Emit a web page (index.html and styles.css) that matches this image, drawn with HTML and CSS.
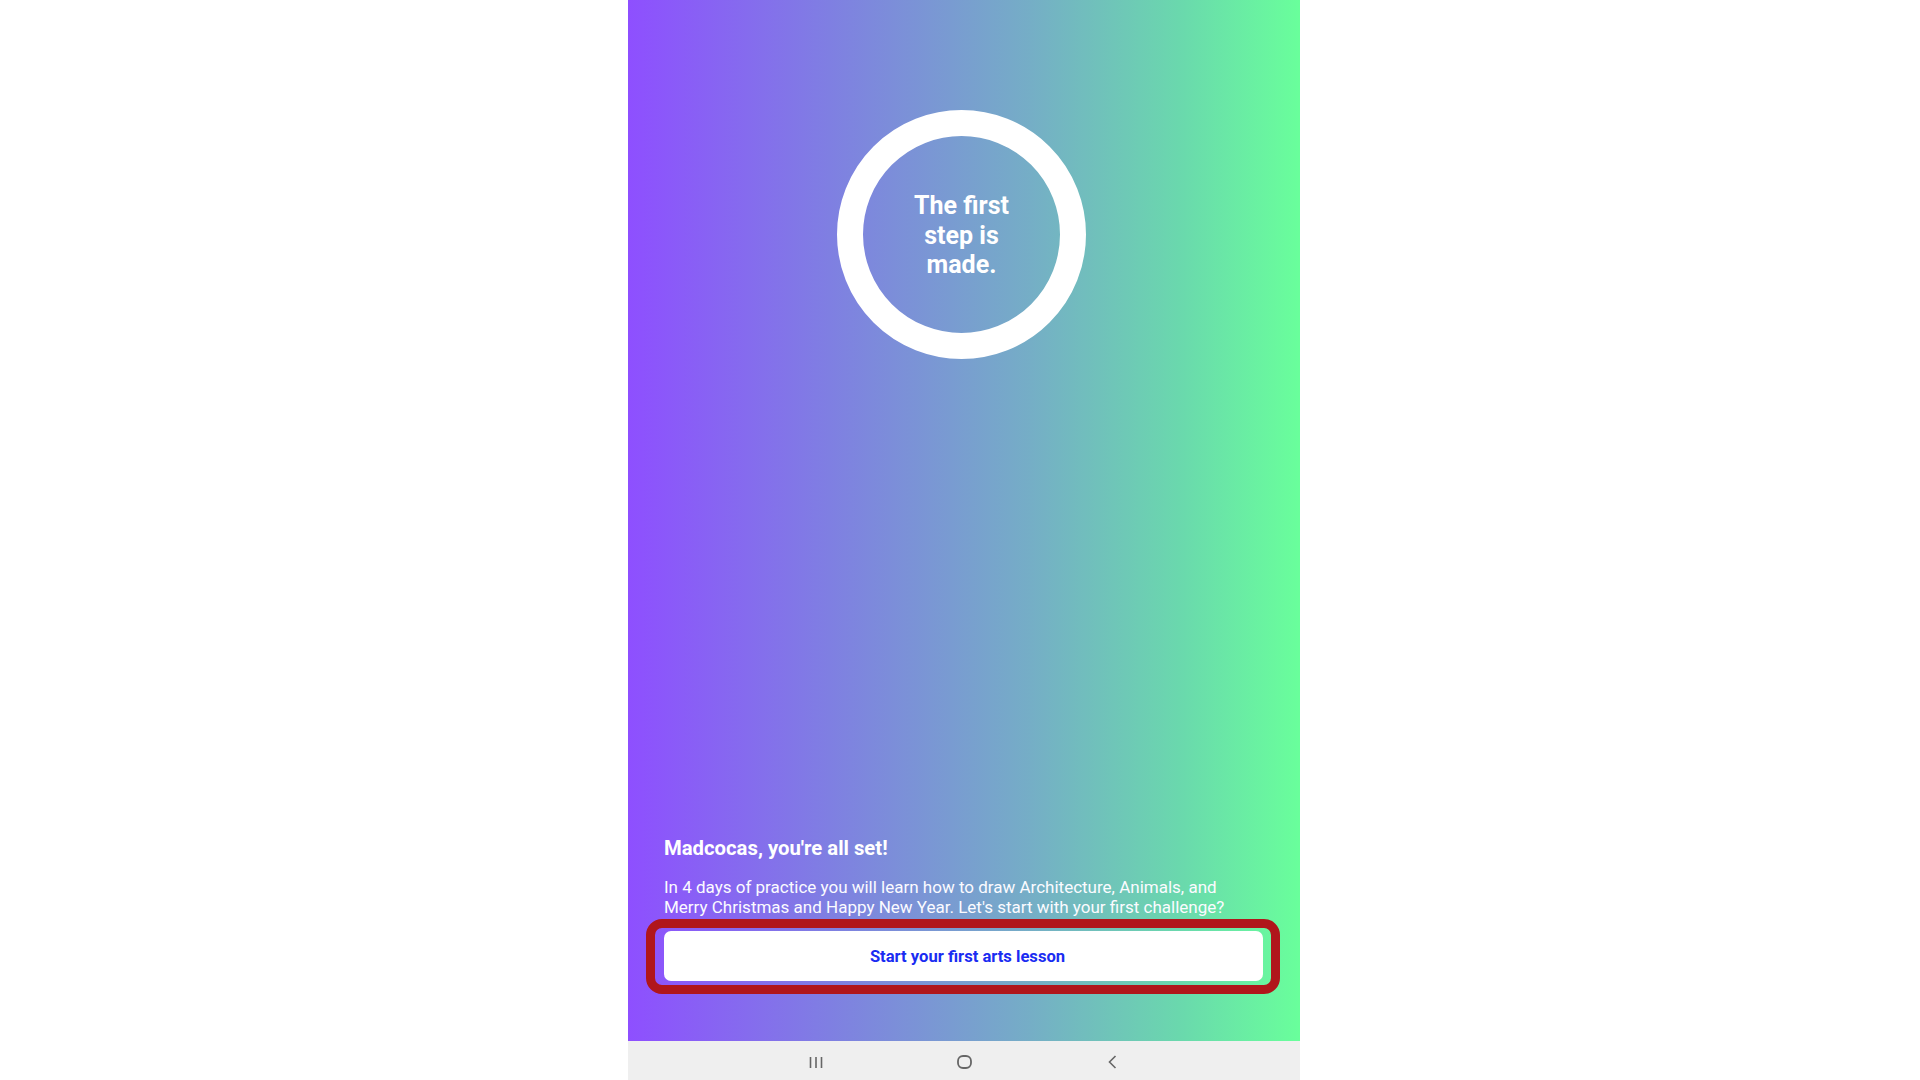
FILE: index.html
```html
<!DOCTYPE html>
<html lang="en">

<head>
    <meta charset="UTF-8">
    <meta name="viewport" content="width=device-width, initial-scale=1.0">
    <title>You're all set</title>
    <link rel="stylesheet" href="styles.css">
</head>

<body>
    <div class="phone">
        <div class="screen">
            <div class="ring">
                <p class="ring-text">The first step is made.</p>
            </div>

            <div class="bottom">
                <h2 class="title">Madcocas, you're all set!</h2>
                <p class="desc">In 4 days of practice you will learn how to draw Architecture, Animals, and Merry Christmas and Happy New Year. Let's start with your first challenge?</p>
                <div class="cta">
                    <button class="start-btn">Start your first arts lesson</button>
                    <span class="highlight"></span>
                </div>
            </div>
        </div>

        <div class="navbar">
            <div class="nav-item">
                <svg width="14" height="13" viewBox="0 0 14 13">
                    <path d="M1.5 1v11M7 1v11M12.5 1v11" stroke="#666" stroke-width="1.6" fill="none" />
                </svg>
            </div>
            <div class="nav-item">
                <svg width="15" height="14" viewBox="0 0 15 14">
                    <rect x="1" y="1" width="13" height="12" rx="5" stroke="#666" stroke-width="1.8" fill="none" />
                </svg>
            </div>
            <div class="nav-item">
                <svg width="9" height="14" viewBox="0 0 9 14">
                    <path d="M7.5 1L1.5 7l6 6" stroke="#666" stroke-width="1.6" fill="none" />
                </svg>
            </div>
        </div>
    </div>
</body>

</html>
```

FILE: styles.css
```css
body {
    margin: 0;
    padding-left: 8px;
    background: #ffffff;
    font-family: Roboto, 'Liberation Sans', sans-serif;
    display: flex;
    justify-content: center;
}

.phone {
    width: 672px;
    height: 1080px;
    display: flex;
    flex-direction: column;
}

.screen {
    flex: 1;
    display: flex;
    flex-direction: column;
    align-items: center;
    padding: 110px 37px 60px 36px;
    background: linear-gradient(to right, #8e4fff 0%, #7f7fe2 30%, #75aec6 60%, #6ad8ad 82%, #69ff9b 100%);
    color: #ffffff;
}

.ring {
    width: 197px;
    height: 197px;
    margin-right: 4px;
    border: 26px solid #ffffff;
    border-radius: 50%;
    display: flex;
    align-items: center;
    justify-content: center;
}

.ring-text {
    margin: 0;
    padding-top: 2px;
    width: 130px;
    text-align: center;
    font-size: 25px;
    font-weight: 700;
    line-height: 29.5px;
    color: #ffffff;
}

.bottom {
    margin-top: auto;
    align-self: stretch;
}

.title {
    margin: 0;
    font-size: 20.3px;
    font-weight: 700;
    line-height: 24px;
}

.desc {
    margin: 18px 0 0;
    font-size: 17px;
    line-height: 19.5px;
    color: #fbfbff;
}

.cta {
    position: relative;
    margin-top: 14px;
}

.start-btn {
    display: block;
    width: 100%;
    height: 50px;
    border: none;
    border-radius: 7px;
    background: #ffffff;
    color: #1a2cf2;
    font-family: inherit;
    font-size: 16.6px;
    font-weight: 700;
    padding: 0 0 0 8px;
    cursor: pointer;
}

.highlight {
    position: absolute;
    top: -12px;
    bottom: -13px;
    left: -18px;
    right: -17px;
    border: 9px solid #b0161b;
    border-radius: 16px;
    pointer-events: none;
}

.navbar {
    height: 39px;
    background: #efefef;
    display: flex;
    justify-content: center;
    align-items: center;
    padding-top: 3px;
    box-sizing: border-box;
}

.nav-item {
    width: 148px;
    display: flex;
    justify-content: center;
}
```
